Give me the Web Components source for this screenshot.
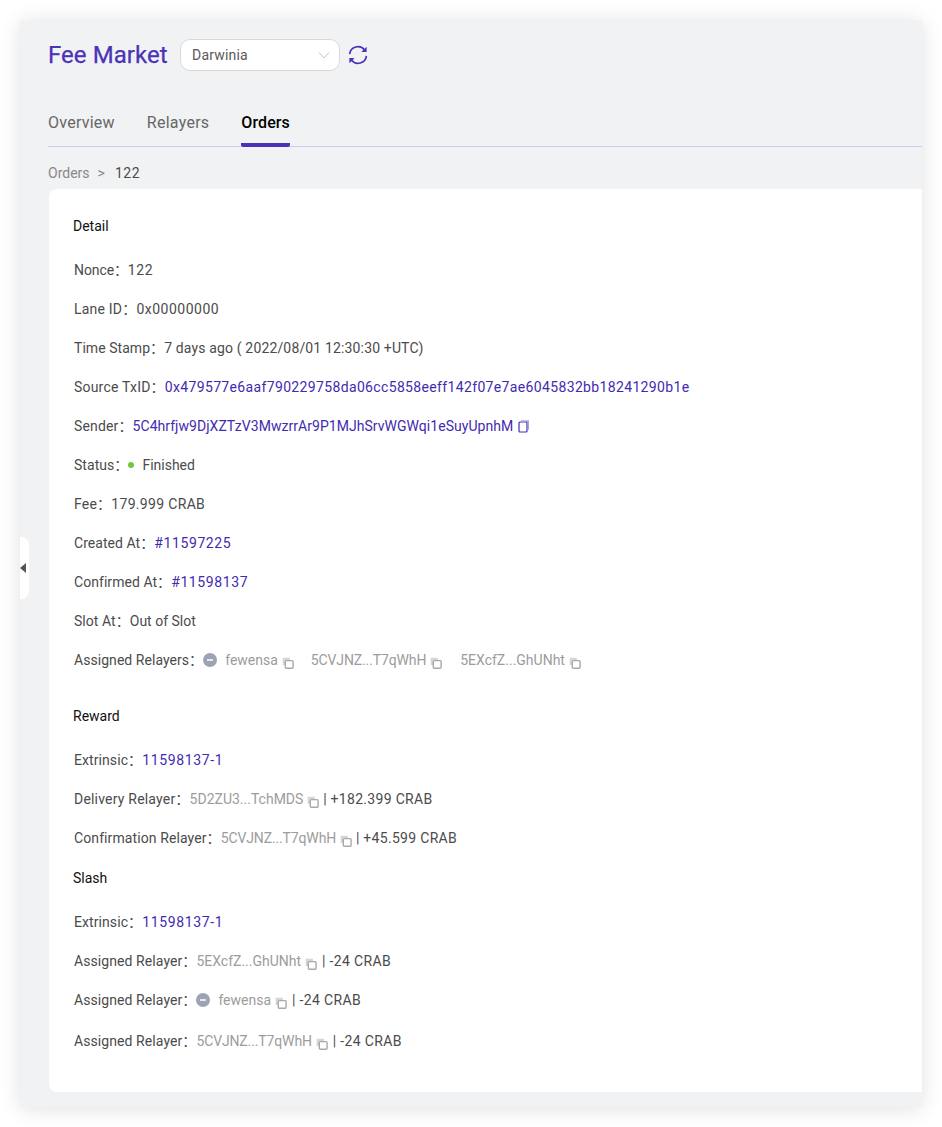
<!DOCTYPE html>
<html lang="zh-CN"><head><meta charset="utf-8">
<style>
html,body{margin:0;background:#fff}
body{font-family:Roboto,"Noto Sans CJK SC","Liberation Sans",sans-serif;font-size:14px;color:#4b4b4b}
</style></head><body>
<template id="t-copy"><style>:host{display:inline-flex;margin-left:4px;position:relative;top:3px}svg{display:block}</style>
<svg width="12" height="12" viewBox="0 0 12 12" fill="none"><path d="M.7 8V.8h7.2v2.4H3.2v4.8z" fill="#d6d6d6"/><rect x="3.3" y="3.6" width="7.8" height="7.6" rx="1" fill="#fff" stroke="#a9a9a9" stroke-width="1.4"/></svg></template>

<template id="t-window"><style>:host{display:block;position:relative;margin:20px;width:902px;height:1087px;box-sizing:border-box;background:#f1f2f4;box-shadow:0 2px 20px rgba(0,0,0,.12);overflow:hidden}</style>
<slot name="head"></slot><slot></slot><slot name="toggle"></slot></template>

<template id="t-head"><style>:host{display:flex;align-items:center;height:70px;padding:0 0 0 28px}
h1{margin:0;font:400 24px/30px Roboto,sans-serif;color:#4b32b8;width:132px;letter-spacing:.05px;-webkit-text-stroke:.25px #4b32b8}
.sel{box-sizing:border-box;width:160px;height:32px;background:#fff;border:1px solid #d9d9d9;border-radius:10px;display:flex;align-items:center;justify-content:space-between;padding:0 9px 0 11px;font-size:14px;color:#5a5a5a;letter-spacing:.2px}
.ref{margin-left:8px;display:flex}</style>
<h1>Fee Market</h1>
<div class="sel"><span>Darwinia</span><svg width="12" height="12" viewBox="0 0 12 12" fill="none"><path d="M1 3.5 6 9l5-5.5" stroke="#c4c4c4" stroke-width="1"/></svg></div>
<span class="ref"><svg width="20" height="20" viewBox="0 0 20 20" fill="none" stroke="#4b32b8" stroke-width="1.7"><path d="M1.6 9.2A8.4 8.4 0 0 1 16.6 5"/><path d="M18.4 10.8A8.4 8.4 0 0 1 3.4 15"/><path d="M18.6 1.8v5.2h-5.2z" fill="#4b32b8" stroke="none"/><path d="M1.4 18.2V13h5.2z" fill="#4b32b8" stroke="none"/></svg></span></template>

<template id="t-tabs"><style>:host{display:flex;gap:32px;height:57px;margin-left:28px;border-bottom:1px solid #cfcbee;box-sizing:border-box;padding-top:14px;align-items:flex-start}
::slotted(*){font-size:16px;line-height:38px;color:#666;height:43px;box-sizing:border-box;display:block;letter-spacing:.25px}
::slotted(.on){color:#000;font-weight:500;border-bottom:4px solid #4b32b8;border-radius:0 0 2px 2px;letter-spacing:.1px}</style><slot></slot></template>

<template id="t-crumb"><style>:host{display:flex;height:42px;align-items:center;margin-left:28px;padding-top:10px;box-sizing:border-box;color:#888;font-size:14px;line-height:20px}
b{font-weight:400;margin:0 10px 0 8px}::slotted(strong){font-weight:400;color:#4b4b4b;letter-spacing:.6px}</style><slot name="a"></slot><b>&gt;</b><slot></slot></template>

<template id="t-card"><style>:host{display:block;margin-left:29px;height:903px;background:#fff;border-radius:8px 0 0 8px;padding:17px 0 0 24px;box-sizing:border-box}</style><slot></slot></template>

<template id="t-title"><style>:host{display:block;height:40px;line-height:40px;margin-bottom:4px;font-size:14px;color:#111}</style><slot></slot></template>

<template id="t-row"><style>:host{display:flex;align-items:center;height:39px;margin-left:1px;padding-top:1px;box-sizing:border-box;white-space:nowrap;font-size:14px;line-height:20px;color:#4b4b4b}
.l{letter-spacing:var(--ls,.05px)}</style><span class="l"><slot name="label"></slot></span><slot></slot></template>

<template id="t-link"><style>:host{color:#3f2bb0}</style><slot></slot></template>
<template id="t-addr"><style>:host{color:#9c9c9c;display:inline-flex;align-items:center}</style><slot></slot><x-copy></x-copy></template>
<template id="t-avatar"><style>:host{display:inline-flex;width:14px;height:14px;border-radius:50%;background:#9ea3b4;align-items:center;justify-content:center;margin-right:8px}i{display:block;width:6px;height:2px;background:#e8e8ee}</style><i></i></template>
<template id="t-toggle"><style>:host{position:absolute;left:0;top:517px;width:9px;height:62px;background:#fff;border-radius:0 8px 8px 0;display:flex;align-items:center}i{display:block;width:0;height:0;border:5px solid transparent;border-left:0;border-right:6px solid #555}</style><i></i></template>

<x-window>
<x-head slot="head"></x-head>
<x-tabs><span>Overview</span><span>Relayers</span><span class="on">Orders</span></x-tabs>
<x-crumb><span slot="a">Orders</span><strong>122</strong></x-crumb>
<x-card>
<x-title>Detail</x-title>
<x-row style="--ls:-.1px"><span slot="label">Nonce：</span><span style="letter-spacing:.6px">122</span></x-row>
<x-row style="--ls:.2px"><span slot="label">Lane ID：</span><span style="letter-spacing:.5px">0x00000000</span></x-row>
<x-row><span slot="label">Time Stamp：</span><span style="letter-spacing:.15px">7 days ago ( 2022/08/01 12:30:30 +UTC)</span></x-row>
<x-row style="--ls:.2px"><span slot="label">Source TxID：</span><x-link style="letter-spacing:.35px">0x479577e6aaf790229758da06cc5858eeff142f07e7ae6045832bb18241290b1e</x-link></x-row>
<x-row style="--ls:.15px"><span slot="label">Sender：</span><x-link style="letter-spacing:.04px">5C4hrfjw9DjXZTzV3MwzrrAr9P1MJhSrvWGWqi1eSuyUpnhM</x-link><svg style="margin-left:5px" width="12" height="14" viewBox="0 0 12 14" fill="none"><rect x="1" y="3" width="8" height="10" rx="1" stroke="#3f2bb0" stroke-width="1.2"/><path d="M3 1.2h8v9.5H9.6V3H3z" fill="#a9a2dd"/></svg></x-row>
<x-row style="--ls:.05px"><span slot="label">Status：</span><span style="display:inline-block;width:6px;height:6px;border-radius:50%;background:#73c73f;margin-right:8px"></span>Finished</x-row>
<x-row style="--ls:.2px"><span slot="label">Fee：</span><span style="letter-spacing:.33px">179.999 CRAB</span></x-row>
<x-row style="--ls:.05px"><span slot="label">Created At：</span><x-link style="letter-spacing:.6px">#11597225</x-link></x-row>
<x-row style="--ls:.05px"><span slot="label">Confirmed At：</span><x-link style="letter-spacing:.6px">#11598137</x-link></x-row>
<x-row><span slot="label">Slot At：</span>Out of Slot</x-row>
<x-row><span slot="label">Assigned Relayers：</span><x-avatar></x-avatar><x-addr style="margin-right:17px">fewensa</x-addr><x-addr style="margin-right:18px;letter-spacing:-.13px">5CVJNZ...T7qWhH</x-addr><x-addr>5EXcfZ...GhUNht</x-addr></x-row>
<x-title style="margin-top:17px">Reward</x-title>
<x-row style="--ls:.08px"><span slot="label">Extrinsic：</span><x-link style="letter-spacing:.65px">11598137-1</x-link></x-row>
<x-row style="--ls:.2px"><span slot="label">Delivery Relayer：</span><x-addr>5D2ZU3...TchMDS</x-addr><span style="letter-spacing:.3px">&nbsp;| +182.399 CRAB</span></x-row>
<x-row style="--ls:.1px"><span slot="label">Confirmation Relayer：</span><x-addr style="letter-spacing:-.13px">5CVJNZ...T7qWhH</x-addr><span style="letter-spacing:.3px">&nbsp;| +45.599 CRAB</span></x-row>
<x-title style="margin-top:1px">Slash</x-title>
<x-row style="--ls:.08px"><span slot="label">Extrinsic：</span><x-link style="letter-spacing:.65px">11598137-1</x-link></x-row>
<x-row style="--ls:.08px"><span slot="label">Assigned Relayer：</span><x-addr>5EXcfZ...GhUNht</x-addr><span style="letter-spacing:.35px;margin-left:1px">&nbsp;| -24 CRAB</span></x-row>
<x-row style="--ls:.08px"><span slot="label">Assigned Relayer：</span><x-avatar></x-avatar><x-addr>fewensa</x-addr><span style="letter-spacing:.35px;margin-left:1px">&nbsp;| -24 CRAB</span></x-row>
<x-row style="height:43px;--ls:.08px"><span slot="label">Assigned Relayer：</span><x-addr style="letter-spacing:-.13px">5CVJNZ...T7qWhH</x-addr><span style="letter-spacing:.35px;margin-left:1px">&nbsp;| -24 CRAB</span></x-row>
</x-card>
<x-toggle slot="toggle"></x-toggle>
</x-window>
<script>
const map={window:'t-window',head:'t-head',tabs:'t-tabs',crumb:'t-crumb',card:'t-card',title:'t-title',row:'t-row',link:'t-link',addr:'t-addr',avatar:'t-avatar',toggle:'t-toggle',copy:'t-copy'};
for(const [n,id] of Object.entries(map)){
  customElements.define('x-'+n,class extends HTMLElement{
    constructor(){super();this.attachShadow({mode:'open'}).appendChild(document.getElementById(id).content.cloneNode(true));}
  });
}
</script>
</body></html>
